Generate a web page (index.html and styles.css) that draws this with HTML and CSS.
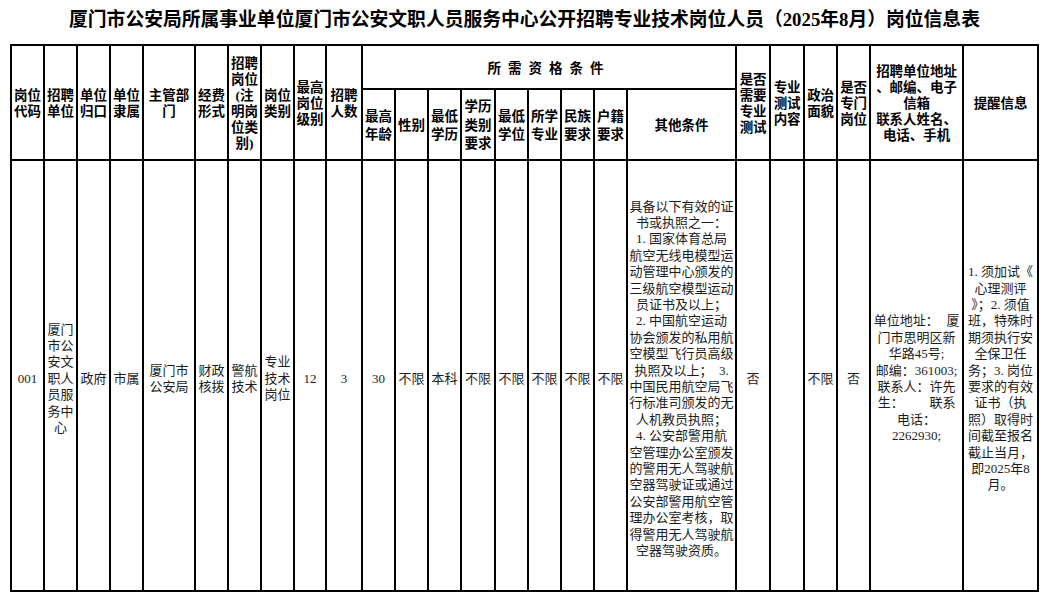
FILE: index.html
```html
<!DOCTYPE html>
<html lang="zh-CN">
<head>
<meta charset="utf-8">
<title>岗位信息表</title>
<link rel="stylesheet" href="styles.css">
</head>
<body>
<div class="page">
  <h1 class="title">厦门市公安局所属事业单位厦门市公安文职人员服务中心公开招聘专业技术岗位人员（2025年8月）岗位信息表</h1>
  <table class="grid">
    <colgroup>
      <col class="w33"><col class="w33"><col class="w33"><col class="w33"><col class="w52">
      <col class="w33"><col class="w33"><col class="w33"><col class="w32"><col class="w36">
      <col class="w33"><col class="w33"><col class="w33"><col class="w34"><col class="w33">
      <col class="w33"><col class="w33"><col class="w33"><col class="w109">
      <col class="w34"><col class="w34"><col class="w33"><col class="w33"><col class="w93"><col class="w75">
    </colgroup>
    <thead>
      <tr class="head-top">
        <th rowspan="2">岗位<br>代码</th>
        <th rowspan="2">招聘<br>单位</th>
        <th rowspan="2">单位<br>归口</th>
        <th rowspan="2">单位<br>隶属</th>
        <th rowspan="2">主管部<br>门</th>
        <th rowspan="2">经费<br>形式</th>
        <th rowspan="2">招聘<br>岗位<br>(注<br>明岗<br>位类<br>别)</th>
        <th rowspan="2">岗位<br>类别</th>
        <th rowspan="2">最高<br>岗位<br>级别</th>
        <th rowspan="2">招聘<br>人数</th>
        <th colspan="9" class="spaced">所需资格条件</th>
        <th rowspan="2">是否<br>需要<br>专业<br>测试</th>
        <th rowspan="2">专业<br>测试<br>内容</th>
        <th rowspan="2">政治<br>面貌</th>
        <th rowspan="2">是否<br>专门<br>岗位</th>
        <th rowspan="2">招聘单位地址<br>、邮编、电子<br>信箱<br>联系人姓名、<br>电话、手机</th>
        <th rowspan="2">提醒信息</th>
      </tr>
      <tr class="head-sub">
        <th>最高<br>年龄</th>
        <th>性别</th>
        <th>最低<br>学历</th>
        <th>学历<br>类别<br>要求</th>
        <th>最低<br>学位</th>
        <th>所学<br>专业</th>
        <th>民族<br>要求</th>
        <th>户籍<br>要求</th>
        <th>其他条件</th>
      </tr>
    </thead>
    <tbody>
      <tr class="body-row">
        <td>001</td>
        <td>厦门市公安文职人员服务中心</td>
        <td>政府</td>
        <td>市属</td>
        <td>厦门市公安局</td>
        <td>财政核拨</td>
        <td>警航技术</td>
        <td>专业技术岗位</td>
        <td>12</td>
        <td>3</td>
        <td>30</td>
        <td>不限</td>
        <td>本科</td>
        <td>不限</td>
        <td>不限</td>
        <td>不限</td>
        <td>不限</td>
        <td>不限</td>
        <td class="lines">
          <span class="ln">具备以下有效的证</span>
          <span class="ln">书或执照之一：</span>
          <span class="ln">1. 国家体育总局</span>
          <span class="ln">航空无线电模型运</span>
          <span class="ln">动管理中心颁发的</span>
          <span class="ln">三级航空模型运动</span>
          <span class="ln">员证书及以上；</span>
          <span class="ln">2. 中国航空运动</span>
          <span class="ln">协会颁发的私用航</span>
          <span class="ln">空模型飞行员高级</span>
          <span class="ln">执照及以上；&nbsp;&nbsp;3.</span>
          <span class="ln">中国民用航空局飞</span>
          <span class="ln">行标准司颁发的无</span>
          <span class="ln">人机教员执照；</span>
          <span class="ln">4. 公安部警用航</span>
          <span class="ln">空管理办公室颁发</span>
          <span class="ln">的警用无人驾驶航</span>
          <span class="ln">空器驾驶证或通过</span>
          <span class="ln">公安部警用航空管</span>
          <span class="ln">理办公室考核，取</span>
          <span class="ln">得警用无人驾驶航</span>
          <span class="ln">空器驾驶资质。</span>
        </td>
        <td>否</td>
        <td></td>
        <td>不限</td>
        <td>否</td>
        <td class="lines">
          <span class="ln split wide"><span>单位地址：</span><span>厦</span></span>
          <span class="ln">门市思明区新</span>
          <span class="ln">华路45号;</span>
          <span class="ln">邮编：361003;</span>
          <span class="ln">联系人：许先</span>
          <span class="ln split narrow"><span>生：</span><span>联系</span></span>
          <span class="ln">电话：</span>
          <span class="ln">2262930;</span>
        </td>
        <td class="lines">
          <span class="ln">1. 须加试《</span>
          <span class="ln">心理测评</span>
          <span class="ln">》；2. 须值</span>
          <span class="ln">班，特殊时</span>
          <span class="ln">期须执行安</span>
          <span class="ln">全保卫任</span>
          <span class="ln">务；3. 岗位</span>
          <span class="ln">要求的有效</span>
          <span class="ln">证书（执</span>
          <span class="ln">照）取得时</span>
          <span class="ln">间截至报名</span>
          <span class="ln">截止当月，</span>
          <span class="ln">即2025年8</span>
          <span class="ln">月。</span>
        </td>
      </tr>
    </tbody>
  </table>
</div>
</body>
</html>
```

FILE: styles.css
```css
* {
  box-sizing: border-box;
}

body {
  margin: 0;
  background: #ffffff;
  color: #000000;
  font-family: "Liberation Serif", "Noto Sans CJK SC", serif;
}

.page {
  padding: 0 0 0 10px;
}

.title {
  margin: 0;
  height: 44px;
  line-height: 40px;
  font-size: 18.8px;
  font-weight: bold;
  text-align: center;
  padding-right: 10px;
  white-space: nowrap;
}

.grid {
  border-collapse: collapse;
  table-layout: fixed;
  width: 1029px;
}

.grid th,
.grid td {
  border: 2px solid #000000;
  padding: 0;
  text-align: center;
  vertical-align: middle;
  overflow: visible;
}

.grid th {
  font-size: 13.5px;
  line-height: 16px;
  font-weight: bold;
  color: #000000;
  padding-top: 3px;
}

.grid td {
  font-size: 13px;
  line-height: 16.4px;
  color: #1c1c1c;
  padding-top: 7px;
}

.w32 { width: 32px; }
.w33 { width: 33px; }
.w34 { width: 34px; }
.w36 { width: 36px; }
.w52 { width: 52px; }
.w75 { width: 75px; }
.w93 { width: 93px; }
.w109 { width: 109px; }

.head-top {
  height: 44px;
}

.head-sub {
  height: 71px;
}

.head-sub th {
  line-height: 18.5px;
}

.spaced {
  letter-spacing: 7px;
  padding-left: 7px;
}

.body-row {
  height: 431px;
}

.lines .ln {
  display: block;
  white-space: nowrap;
}

.lines .split {
  display: flex;
  justify-content: space-between;
  margin: 0 auto;
}

.lines .split.wide {
  width: 86px;
}

.lines .split.narrow {
  width: 78px;
}
```
